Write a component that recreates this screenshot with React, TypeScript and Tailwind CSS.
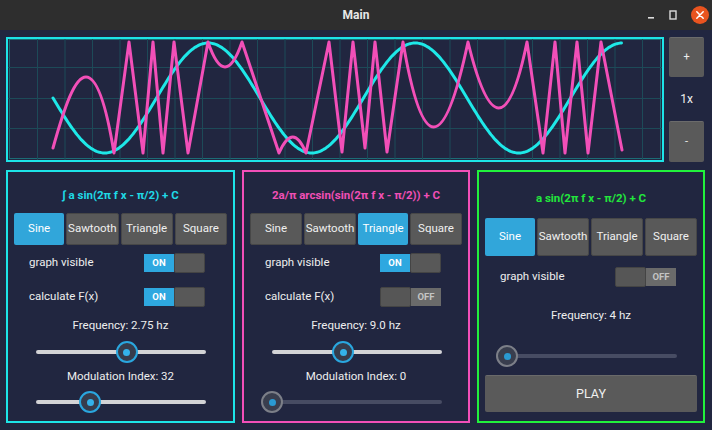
import React from "react";

const font = { fontFamily: "Roboto, 'Liberation Sans', sans-serif" };

const waveNames = ["Sine", "Sawtooth", "Triangle", "Square"];

function TitleBar() {
  return (
    <div className="relative flex h-[30px] w-full items-center justify-center bg-[#2e2e2e]">
      <span className="text-[12px] font-bold text-[#e8e8e8]">Main</span>
      <div className="absolute right-[2px] top-0 flex h-[30px] items-center gap-[12px]">
        <svg width="10" height="10" viewBox="0 0 10 10">
          <rect x="2" y="7" width="6" height="1.6" fill="#dcdcdc" />
        </svg>
        <svg width="10" height="10" viewBox="0 0 10 10">
          <rect x="2" y="1" width="6" height="8" fill="none" stroke="#dcdcdc" strokeWidth="1.4" />
        </svg>
        <svg width="20" height="20" viewBox="0 0 20 20">
          <circle cx="10" cy="10" r="9" fill="#e9541f" />
          <path d="M6.8 6.8 L13.2 13.2 M13.2 6.8 L6.8 13.2" stroke="#fff" strokeWidth="1.5" strokeLinecap="round" />
        </svg>
      </div>
    </div>
  );
}

function Graph() {
  const cyan: string[] = [];
  for (let x = 53; x <= 622; x += 1.5) {
    const y = 98 + 55 * Math.sin((2 * Math.PI * (x - 53)) / 207);
    cyan.push(`${x.toFixed(1)},${y.toFixed(1)}`);
  }
  const pink =
    "M53 148 C65 105 75 77 86 77 C98 77 107 110 114 153 L129 42 L143 153 L153 42 L163 153 L174 42 L188 153 L208 42 Q225 92 242 42 L279 153 Q293 121 306 153 L329 42 L342 152 L353 42 L365 148 L375 42 L387 152 L403 42 Q432 212 468 42 Q500 174 527 42 L543 153 L555 42 L565 153 L577 42 L588 153 L601 42 L622 150";
  const vLines: number[] = [];
  for (let k = 0; k < 24; k++) vLines.push(37.5 + 27.5 * k);
  const hLines = [67.5, 98.5, 128.5];
  return (
    <div className="h-[125px] w-[658px] shrink-0 border-2 border-[#1de4e8]">
      <svg width="654" height="121" viewBox="8 39 654 121" className="block">
        <rect x="9.5" y="39.5" width="651" height="119" fill="none" stroke="#1b6c76" strokeWidth="1" />
        {vLines.map((x) => (
          <line key={x} x1={x} y1="39" x2={x} y2="160" stroke="#1d4a58" strokeWidth="1" />
        ))}
        {hLines.map((y) => (
          <line key={y} x1="8" y1={y} x2="662" y2={y} stroke="#1d4a58" strokeWidth="1" />
        ))}
        <polyline points={cyan.join(" ")} fill="none" stroke="#1ee8e8" strokeWidth="3" strokeLinecap="round" strokeLinejoin="round" />
        <path d={pink} fill="none" stroke="#f24fb8" strokeWidth="3" strokeLinecap="round" strokeLinejoin="round" />
      </svg>
    </div>
  );
}

function ZoomButtons() {
  return (
    <div className="flex w-[35px] shrink-0 flex-col">
      <div className="flex h-[40px] items-center justify-center rounded-[2px] border-t border-[#6b6b6b] bg-[#5a5a5a] text-[11px] text-[#eeeeee]">
        +
      </div>
      <div className="flex flex-1 items-center justify-center text-[12px] text-[#eeeeee]">1x</div>
      <div className="flex h-[41px] items-center justify-center rounded-[2px] border-t border-[#6b6b6b] bg-[#5a5a5a] text-[11px] text-[#eeeeee]">
        -
      </div>
    </div>
  );
}

function WaveButtons({ selected, tall }: { selected: number; tall?: boolean }) {
  return (
    <div className={`flex gap-[2px] px-[6px] ${tall ? "h-[38px]" : "h-[32px]"}`}>
      {waveNames.map((name, i) => (
        <div
          key={name}
          className={
            i === selected
              ? "flex flex-1 items-center justify-center rounded-[2px] bg-[#31a6da] text-[11.5px] text-white"
              : "flex flex-1 items-center justify-center rounded-[2px] border border-[#474747] bg-[#595959] text-[11.5px] text-[#f0f0f0]"
          }
        >
          {name}
        </div>
      ))}
    </div>
  );
}

function Toggle({ on }: { on: boolean }) {
  if (on) {
    return (
      <div className="flex h-[20px] w-[61px] items-center">
        <div className="flex h-[18px] w-[30px] items-center justify-center bg-[#2ea8e0] text-[9.5px] font-bold text-white">
          ON
        </div>
        <div className="h-[20px] w-[31px] rounded-[2px] border border-[#444444] bg-[#585858]" />
      </div>
    );
  }
  return (
    <div className="flex h-[20px] w-[61px] items-center">
      <div className="h-[20px] w-[31px] rounded-[2px] border border-[#444444] bg-[#565656]" />
      <div className="flex h-[18px] w-[30px] items-center justify-center bg-[#6a6a6a] text-[9.5px] font-bold text-[#c4c4c4]">
        OFF
      </div>
    </div>
  );
}

function ToggleRow({ label, on, className }: { label: string; on: boolean; className: string }) {
  return (
    <div className={`flex h-[20px] items-center ${className}`}>
      <div className="w-[136px] pl-[21px] text-[11.5px] text-[#eeeeee]">{label}</div>
      <Toggle on={on} />
    </div>
  );
}

function Label({ text, className }: { text: string; className: string }) {
  return (
    <div className={`flex h-[16px] items-center justify-center text-[11.5px] text-[#eeeeee] ${className}`}>{text}</div>
  );
}

function Slider({ value, active, className }: { value: number; active: boolean; className: string }) {
  return (
    <div className={`relative ml-[28px] h-[22px] w-[170px] ${className}`}>
      <div
        className={
          active
            ? "absolute left-0 right-0 top-[9px] h-[4px] rounded-full bg-[#d3d3d6]"
            : "absolute left-0 right-0 top-[9px] h-[4px] rounded-full bg-[#474c63]"
        }
      />
      <div
        className={
          active
            ? "absolute top-0 flex h-[22px] w-[22px] -translate-x-1/2 items-center justify-center rounded-full border-2 border-[#2aa7df] bg-[#363c4c]"
            : "absolute top-0 flex h-[22px] w-[22px] -translate-x-1/2 items-center justify-center rounded-full border-2 border-[#7c7f88] bg-[#393e4e]"
        }
        style={{ left: `${value * 100}%` }}
      >
        <div className={active ? "h-[7px] w-[7px] rounded-full bg-[#34b2ea]" : "h-[7px] w-[7px] rounded-full bg-[#2a9ad2]"} />
      </div>
    </div>
  );
}

export default function App() {
  return (
    <div className="h-[430px] w-[712px] overflow-hidden bg-[#212640]" style={font}>
      <TitleBar />
      <div className="px-[6px] pt-[7px]">
        <div className="flex h-[125px] gap-[5px]">
          <Graph />
          <ZoomButtons />
        </div>
        <div className="mt-[8px] flex gap-[7px]">
          <div className="flex h-[253px] w-[229px] flex-col border-2 border-[#1de4e8]">
            <div className="mt-[14px] flex h-[20px] items-center justify-center text-[11.5px] font-bold text-[#1fd9e6]">
              ∫ a sin(2π f x - π/2) + C
            </div>
            <div className="mt-[7px]">
              <WaveButtons selected={0} />
            </div>
            <ToggleRow label="graph visible" on={true} className="mt-[8px]" />
            <ToggleRow label="calculate F(x)" on={true} className="mt-[14px]" />
            <Label text="Frequency: 2.75 hz" className="mt-[11px]" />
            <Slider value={0.535} active={true} className="mt-[7px]" />
            <Label text="Modulation Index: 32" className="mt-[6px]" />
            <Slider value={0.318} active={true} className="mt-[6px]" />
          </div>
          <div className="flex h-[253px] w-[228px] flex-col border-2 border-[#f24fb8]">
            <div className="mt-[14px] flex h-[20px] items-center justify-center text-[11.5px] font-bold text-[#f04fb5]">
              2a/π arcsin(sin(2π f x - π/2)) + C
            </div>
            <div className="mt-[7px]">
              <WaveButtons selected={2} />
            </div>
            <ToggleRow label="graph visible" on={true} className="mt-[8px]" />
            <ToggleRow label="calculate F(x)" on={false} className="mt-[14px]" />
            <Label text="Frequency: 9.0 hz" className="mt-[11px]" />
            <Slider value={0.418} active={true} className="mt-[7px]" />
            <Label text="Modulation Index: 0" className="mt-[6px]" />
            <Slider value={0} active={false} className="mt-[6px]" />
          </div>
          <div className="flex h-[253px] w-[228px] flex-col border-2 border-[#21f23c]">
            <div className="mt-[17px] flex h-[20px] items-center justify-center text-[11.5px] font-bold text-[#22e63c]">
              a sin(2π f x - π/2) + C
            </div>
            <div className="mt-[9px]">
              <WaveButtons selected={0} tall />
            </div>
            <ToggleRow label="graph visible" on={false} className="mt-[11px]" />
            <Label text="Frequency: 4 hz" className="mt-[21px]" />
            <Slider value={0} active={false} className="mt-[21px]" />
            <div className="mx-[6px] mt-[8px] flex h-[37px] items-center justify-center rounded-[2px] border-t border-[#6a6a6a] bg-[#5a5a5a] text-[12.5px] text-[#f0f0f0]">
              PLAY
            </div>
          </div>
        </div>
      </div>
    </div>
  );
}
